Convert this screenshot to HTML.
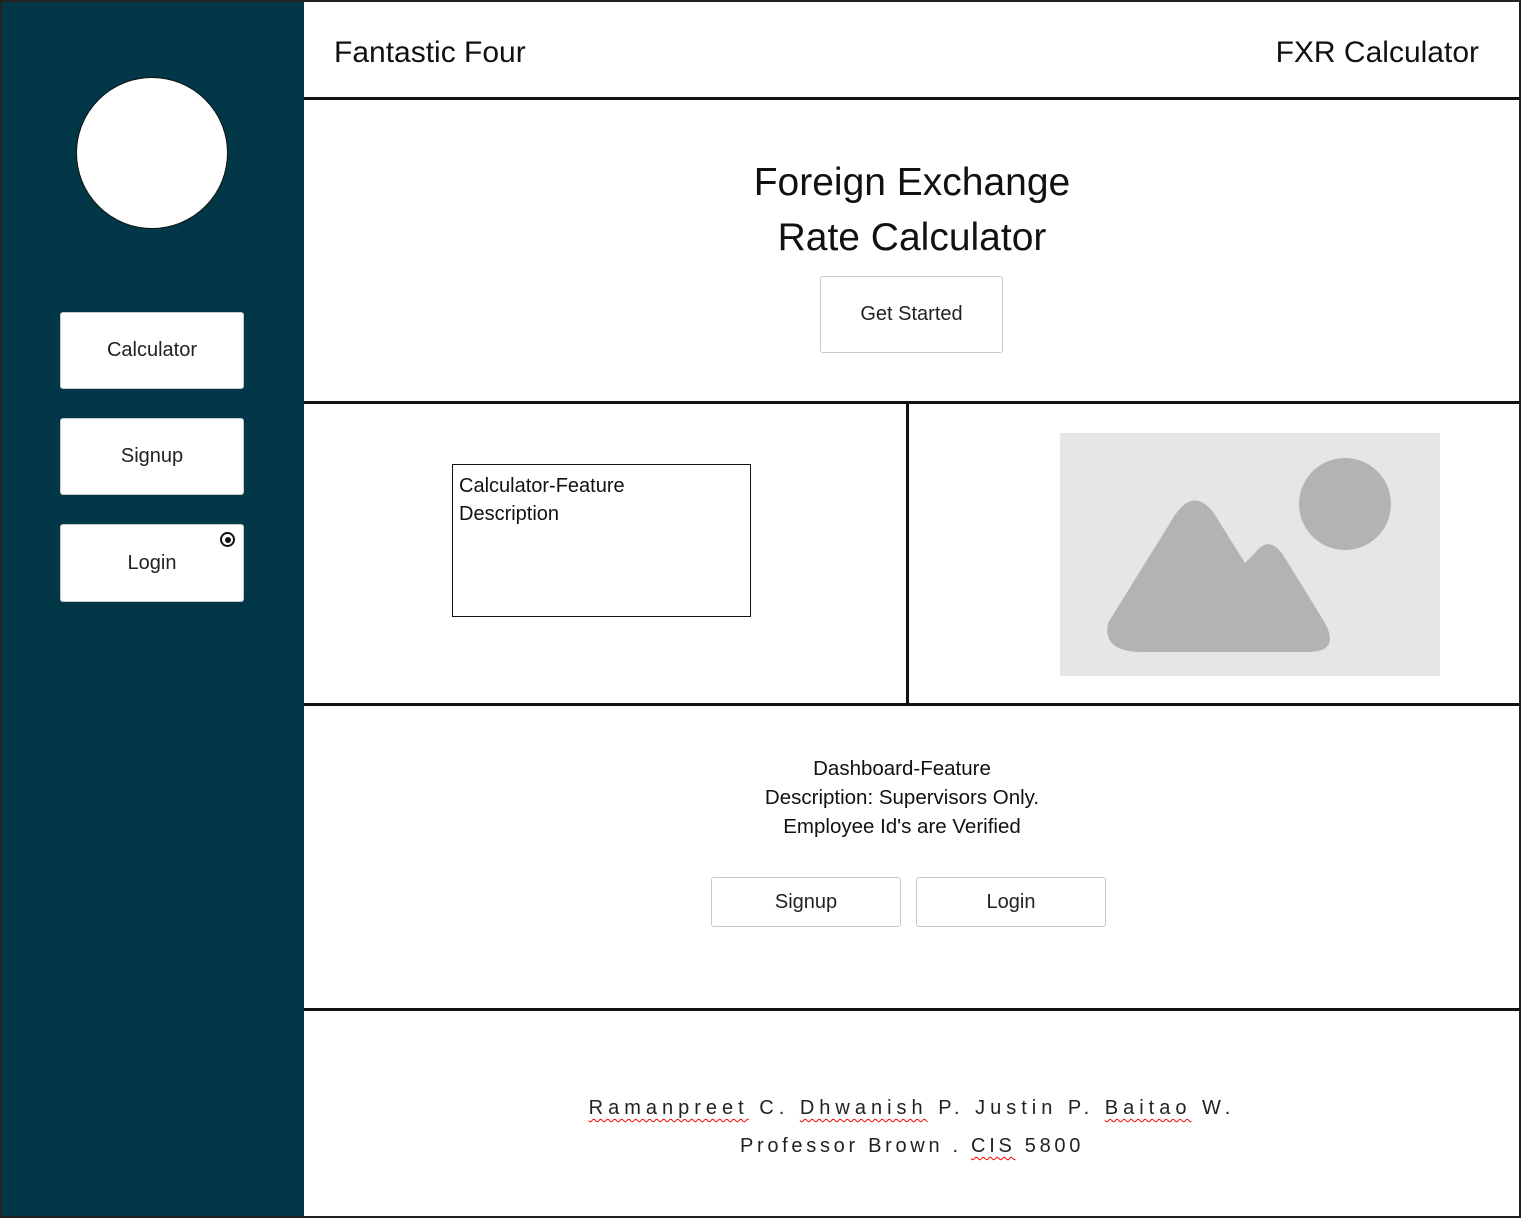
<!DOCTYPE html>
<html><head><meta charset="utf-8"><style>
*{margin:0;padding:0;box-sizing:border-box}
body{width:1522px;height:1219px;background:#fff;position:relative;font-family:"Liberation Sans",Arial,sans-serif;color:#111;overflow:hidden}
.a{position:absolute}
.hl{position:absolute;height:3px;background:#111;left:304px;width:1216px}
.btn{position:absolute;background:#fff;border:1px solid #c8c8c8;border-radius:3px;display:flex;align-items:center;justify-content:center;font-size:20px;color:#222}
.sq{text-decoration:underline wavy red;text-decoration-thickness:1px;text-underline-offset:4px}
</style></head><body>
<div class="a" style="left:0;top:0;width:1521px;height:1218px;border:2px solid #222"></div>
<div class="a" style="left:2px;top:2px;width:302px;height:1214px;background:#023747"></div>
<div class="a" style="left:76px;top:77px;width:152px;height:152px;border-radius:50%;background:#fff;border:1.5px solid #111"></div>
<div class="btn" style="left:60px;top:312px;width:184px;height:77px">Calculator</div>
<div class="btn" style="left:60px;top:418px;width:184px;height:77px">Signup</div>
<div class="btn" style="left:60px;top:524px;width:184px;height:78px">Login</div>
<div class="a" style="left:220px;top:532px;width:15px;height:15px;border:2px solid #111;border-radius:50%;background:#fff"><div style="margin:2.5px;width:6px;height:6px;border-radius:50%;background:#111"></div></div>

<div class="a" style="left:334px;top:36px;font-size:30px">Fantastic Four</div>
<div class="a" style="right:43px;top:36px;font-size:30px">FXR Calculator</div>
<div class="hl" style="top:97px"></div>
<div class="a" style="left:304px;width:1216px;top:155px;text-align:center;font-size:39px;line-height:55px">Foreign Exchange<br>Rate Calculator</div>
<div class="btn" style="left:820px;top:276px;width:183px;height:77px">Get Started</div>
<div class="hl" style="top:401px"></div>
<div class="a" style="left:906px;top:403px;width:3px;height:302px;background:#111"></div>
<div class="a" style="left:452px;top:464px;width:299px;height:153px;border:1.5px solid #111;padding:7px 6px;font-size:20px;line-height:28px">Calculator-Feature<br>Description</div>
<div class="a" style="left:1060px;top:433px;width:380px;height:243px;background:#e6e6e6">
<svg width="380" height="243" viewBox="0 0 380 243"><circle cx="285" cy="71" r="46" fill="#b3b3b3"/><path d="M48 190 Q 42 218 80 219 L 250 219 Q 280 218 265 190 L 225 125 Q 210 100 195 120 L 185 130 L 160 90 Q 135 45 110 90 Z" fill="#b3b3b3"/></svg></div>
<div class="hl" style="top:703px"></div>
<div class="a" style="left:304px;width:1196px;top:754px;text-align:center;font-size:20.5px;line-height:29px">Dashboard-Feature<br>Description: Supervisors Only.<br>Employee Id's are Verified</div>
<div class="btn" style="left:711px;top:877px;width:190px;height:50px">Signup</div>
<div class="btn" style="left:916px;top:877px;width:190px;height:50px">Login</div>
<div class="hl" style="top:1008px"></div>
<div class="a" style="left:304px;width:1216px;top:1089px;text-align:center;font-size:20px;line-height:38px;color:#222"><div style="letter-spacing:5px"><span class="sq">Ramanpreet</span> C. <span class="sq">Dhwanish</span> P. Justin P. <span class="sq">Baitao</span> W.</div><div style="letter-spacing:3.7px">Professor Brown . <span class="sq">CIS</span> 5800</div></div>
</body></html>
